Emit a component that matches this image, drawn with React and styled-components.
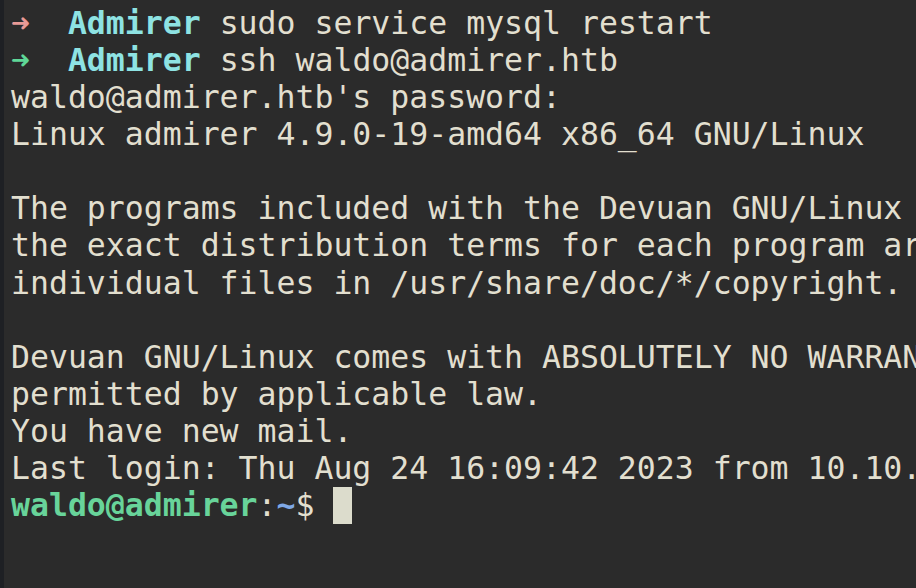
import React from 'react'
import styled, { createGlobalStyle } from 'styled-components'

const GlobalStyle = createGlobalStyle`
  html, body {
    margin: 0;
    padding: 0;
    background: #2b2b2b;
  }
`

const Window = styled.div`
  width: 916px;
  height: 588px;
  overflow: hidden;
  box-sizing: border-box;
  background: #2b2b2b;
  border-left: 4px solid #1e2024;
  padding: 5px 0 0 7px;
`

const Screen = styled.pre`
  margin: 0;
  font-family: 'DejaVu Sans Mono', 'Liberation Mono', monospace;
  font-size: 31.5px;
  line-height: 37.08px;
  color: #e2dfcf;
  white-space: pre;
`

const Line = styled.div`
  height: 37.08px;
`

const Arrow = styled.span`
  color: ${(p) => (p.ok ? '#5fd797' : '#e89a96')};
`

const Dir = styled.span`
  color: #8ee3e3;
  font-weight: bold;
`

const UserHost = styled.span`
  color: #68d49a;
  font-weight: bold;
`

const Path = styled.span`
  color: #7fa8e6;
  font-weight: bold;
`

const Cursor = styled.span`
  display: inline-block;
  width: 19px;
  height: 37px;
  vertical-align: top;
  background: #dcdccc;
`

const output = [
  "waldo@admirer.htb's password:",
  'Linux admirer 4.9.0-19-amd64 x86_64 GNU/Linux',
  '',
  'The programs included with the Devuan GNU/Linux system are free software;',
  'the exact distribution terms for each program are described in the',
  'individual files in /usr/share/doc/*/copyright.',
  '',
  'Devuan GNU/Linux comes with ABSOLUTELY NO WARRANTY, to the extent',
  'permitted by applicable law.',
  'You have new mail.',
  'Last login: Thu Aug 24 16:09:42 2023 from 10.10.14.23',
]

export default function App() {
  return (
    <>
      <GlobalStyle />
      <Window>
        <Screen>
          <Line>
            <Arrow>➜</Arrow>  <Dir>Admirer</Dir> sudo service mysql restart
          </Line>
          <Line>
            <Arrow ok>➜</Arrow>  <Dir>Admirer</Dir> ssh waldo@admirer.htb
          </Line>
          {output.map((text, i) => (
            <Line key={i}>{text}</Line>
          ))}
          <Line>
            <UserHost>waldo@admirer</UserHost>:<Path>~</Path>$ <Cursor />
          </Line>
        </Screen>
      </Window>
    </>
  )
}
